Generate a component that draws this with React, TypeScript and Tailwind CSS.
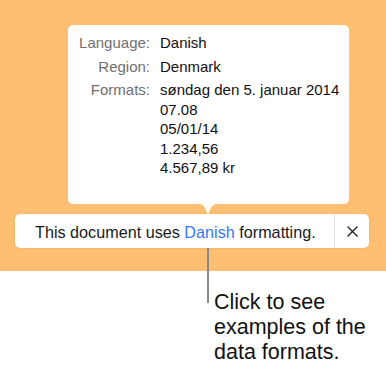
import React from 'react';

const ROWS: { label: string; lines: string[] }[] = [
  { label: 'Language:', lines: ['Danish'] },
  { label: 'Region:', lines: ['Denmark'] },
  {
    label: 'Formats:',
    lines: ['søndag den 5. januar 2014', '07.08', '05/01/14', '1.234,56', '4.567,89 kr'],
  },
];

function Popover() {
  return (
    <div className="relative ml-[68px] w-[281px] h-[179px] bg-white rounded-[5px] pt-[8px]">
      <div className="grid grid-cols-[82px_1fr] gap-x-[10px] gap-y-[4px] text-[15px] leading-[19.5px]">
        {ROWS.map((row) => (
          <React.Fragment key={row.label}>
            <div className="text-right text-[#6f6f6f]">{row.label}</div>
            <div className="text-[#111]">
              {row.lines.map((l) => (
                <div key={l}>{l}</div>
              ))}
            </div>
          </React.Fragment>
        ))}
      </div>
      {/* tail */}
      <svg
        className="absolute left-[127px] top-[178px]"
        width="26"
        height="13"
        viewBox="0 0 26 13"
      >
        <path d="M0 0 C8 0 11 4 13 13 C15 4 18 0 26 0 Z" fill="#fff" />
      </svg>
    </div>
  );
}

function Bar() {
  return (
    <div className="ml-[15px] mt-[10px] w-[354px] h-[34px] bg-white rounded-[5px] shadow-[0_0_0_0.5px_rgba(0,0,0,0.08)] flex">
      <div className="flex-1 pl-[20px] pt-[3px] text-[16.2px] leading-[31px] text-[#1a1a1a]">
        This document uses <span className="text-[#3478F6]">Danish</span> formatting.
      </div>
      <div className="w-px bg-[#e2e2e2]" />
      <div className="w-[34px] flex items-center justify-center">
        <svg width="11" height="11" viewBox="0 0 11 11">
          <path d="M1 1 L10 10 M10 1 L1 10" stroke="#222" strokeWidth="1.4" strokeLinecap="round" />
        </svg>
      </div>
    </div>
  );
}

export default function App() {
  return (
    <div
      className="relative w-[386px] h-[372px] bg-white overflow-hidden"
      style={{ fontFamily: '"Liberation Sans", Arial, sans-serif' }}
    >
      <div className="h-[271px] bg-[#FEBF73] pt-[25px]">
        <Popover />
        <Bar />
      </div>
      {/* callout leader */}
      <div className="absolute left-[207px] top-[248px] w-[1.5px] h-[55px] bg-[#8a8a8a]" />
      <div className="pl-[214px] pt-[19px] text-[21.5px] leading-[25px] text-[#111]">
        <div>Click to see</div>
        <div>examples of the</div>
        <div>data formats.</div>
      </div>
    </div>
  );
}
